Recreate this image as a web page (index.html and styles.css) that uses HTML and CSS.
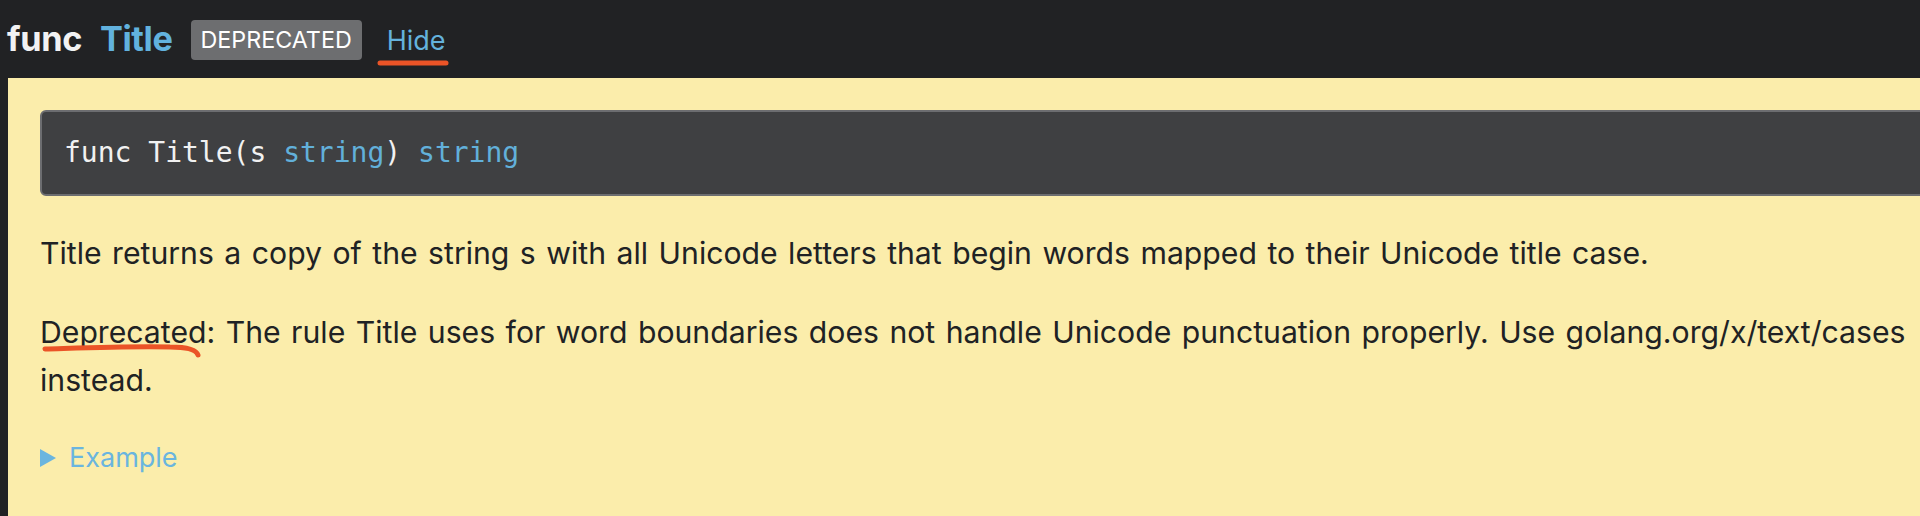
FILE: index.html
```html
<!DOCTYPE html>
<html lang="en">
<head>
<meta charset="utf-8">
<title>func Title</title>
<link rel="stylesheet" href="styles.css">
</head>
<body>
<div class="page">
  <header class="decl-header">
    <span class="kw">func</span>
    <a class="name">Title</a>
    <span class="badge">DEPRECATED</span>
    <a class="hide">Hide</a>
  </header>
  <section class="deprecated">
    <pre class="code"><span class="plain">func Title(s </span><span class="type">string</span><span class="plain">) </span><span class="type">string</span></pre>
    <p class="para">Title returns a copy of the string s with all Unicode letters that begin words mapped to their Unicode title case.</p>
    <p class="para">Deprecated: The rule Title uses for word boundaries does not handle Unicode punctuation properly. Use golang.org/x/text/cases instead.</p>
    <div class="example"><span class="tri"></span><span class="ex-label">Example</span></div>
  </section>
  <svg class="marks" width="1920" height="516" viewBox="0 0 1920 516">
    <path d="M380 63 L446 63" />
    <path d="M45 349 C 80 348, 130 346, 170 347 C 185 347, 196 349, 198 355" />
  </svg>
</div>
</body>
</html>
```

FILE: styles.css
```css
html, body {
  margin: 0;
  padding: 0;
  background: #212224;
  overflow: hidden;
}

.page {
  position: relative;
  width: 1920px;
  height: 516px;
  display: flex;
  flex-direction: column;
  font-family: Inter, Roboto, "Liberation Sans", sans-serif;
}

.decl-header {
  height: 78px;
  display: flex;
  align-items: center;
  padding-left: 7px;
  flex: none;
}

.kw {
  font-size: 34.3px;
  font-weight: 700;
  line-height: 38px;
  color: #f2f2f3;
  letter-spacing: -0.4px;
}

.name {
  font-size: 34.3px;
  font-weight: 700;
  line-height: 38px;
  color: #62b2de;
  margin-left: 18px;
  letter-spacing: -0.4px;
}

.badge {
  margin-left: 18px;
  height: 40px;
  padding: 0 10px;
  display: flex;
  align-items: center;
  background: #6d6e70;
  color: #ffffff;
  border-radius: 4px;
  font-size: 23.3px;
  line-height: 24px;
  margin-top: 2px;
}

.hide {
  margin-left: 25px;
  font-size: 27px;
  line-height: 27px;
  color: #64b2dc;
  margin-top: 2px;
}

.deprecated {
  flex: 1;
  margin-left: 8px;
  background: #fbedab;
  padding: 32px 0 0 32px;
}

.code {
  margin: 0 -40px 0 0;
  border: 2px solid #6c6d70;
  border-radius: 6px;
  background: #3f4042;
  padding: 20px 22px;
  font-family: "DejaVu Sans Mono", "Liberation Mono", monospace;
  font-size: 28px;
  line-height: 42px;
  color: #f1f1f1;
  white-space: pre;
}

.type {
  color: #62b0da;
}

.para {
  margin: 33px -10px 0 0;
  font-size: 30.2px;
  line-height: 48px;
  word-spacing: 2px;
  color: #202224;
}

.para + .para {
  margin-top: 31px;
}

.example {
  margin-top: 32px;
  display: flex;
  align-items: center;
  height: 44px;
  color: #6ab5df;
}

.tri {
  width: 0;
  height: 0;
  border-top: 9px solid transparent;
  border-bottom: 9px solid transparent;
  border-left: 16px solid #6ab5df;
  margin-left: 0;
}

.ex-label {
  margin-left: 13px;
  font-size: 27px;
  line-height: 44px;
}

.marks {
  position: absolute;
  left: 0;
  top: 0;
  pointer-events: none;
  fill: none;
  stroke: #eb5427;
  stroke-width: 5;
  stroke-linecap: round;
  stroke-linejoin: round;
}
```
